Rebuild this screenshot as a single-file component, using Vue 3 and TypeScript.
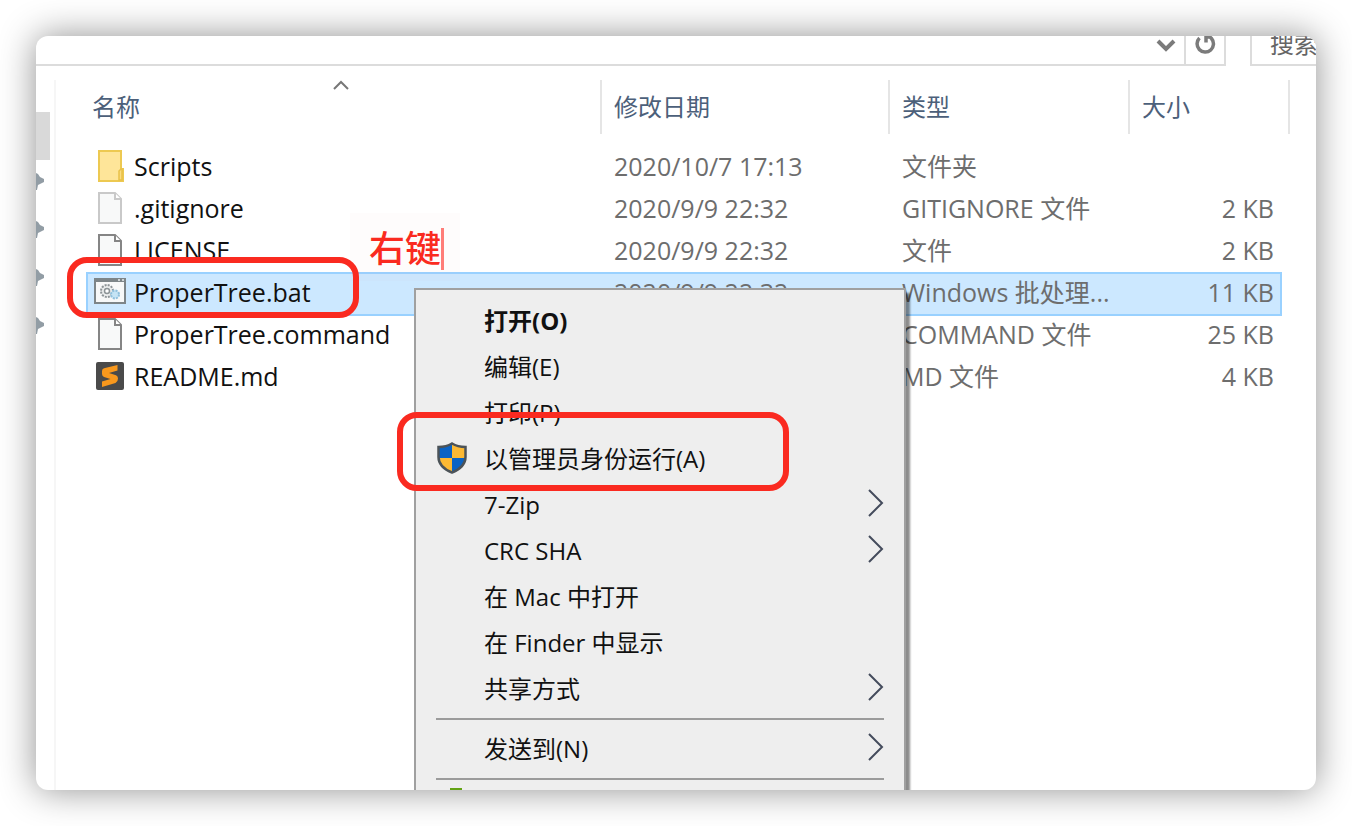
<script setup lang="ts">
type IconKind = 'folder' | 'faded' | 'file' | 'batch' | 'sublime'

interface FileRow {
  name: string
  date: string
  type: string
  size: string
  icon: IconKind
  selected?: boolean
}

interface MenuItem {
  label: string
  strong?: boolean
  shield?: boolean
  submenu?: boolean
}

const columns: string[] = ['名称', '修改日期', '类型', '大小']

const files: FileRow[] = [
  { name: 'Scripts', date: '2020/10/7 17:13', type: '文件夹', size: '', icon: 'folder' },
  { name: '.gitignore', date: '2020/9/9 22:32', type: 'GITIGNORE 文件', size: '2 KB', icon: 'faded' },
  { name: 'LICENSE', date: '2020/9/9 22:32', type: '文件', size: '2 KB', icon: 'file' },
  { name: 'ProperTree.bat', date: '2020/9/9 22:32', type: 'Windows 批处理...', size: '11 KB', icon: 'batch', selected: true },
  { name: 'ProperTree.command', date: '2020/9/9 22:32', type: 'COMMAND 文件', size: '25 KB', icon: 'file' },
  { name: 'README.md', date: '2020/9/9 22:32', type: 'MD 文件', size: '4 KB', icon: 'sublime' },
]

const mainItems: MenuItem[] = [
  { label: '打开(O)', strong: true },
  { label: '编辑(E)' },
  { label: '打印(P)' },
  { label: '以管理员身份运行(A)', shield: true },
  { label: '7-Zip', submenu: true },
  { label: 'CRC SHA', submenu: true },
  { label: '在 Mac 中打开' },
  { label: '在 Finder 中显示' },
  { label: '共享方式', submenu: true },
]

const groups: MenuItem[][] = [mainItems, [{ label: '发送到(N)', submenu: true }]]
</script>

<template>
  <div class="page">
    <main class="window">
      <div class="toolbar">
        <div class="address">
          <button class="tool history" aria-label="历史记录">
            <svg width="20" height="14" viewBox="0 0 20 14"><path d="M2 2l8 8 8-8" fill="none" stroke="#7b7b7b" stroke-width="4" /></svg>
          </button>
          <button class="tool refresh" aria-label="刷新">
            <svg width="22" height="24" viewBox="0 0 22 24">
              <path d="M5.500 6A8.200 8.200 0 1 0 17.500 6.500L16 5H12V10.500" fill="none" stroke="#7b7b7b" stroke-width="3.500" />
            </svg>
          </button>
        </div>
        <input class="search" type="text" placeholder="搜索" aria-label="搜索" />
      </div>

      <div class="body">
        <aside class="side">
          <div class="thumb"></div>
          <svg v-for="n in 4" :key="n" class="pin" width="10" height="48" viewBox="0 0 10 48">
            <path d="M0 13l2 1 2 3 4 2v3l-4 2-2 1-1 5H0z" fill="#929da5" />
          </svg>
        </aside>

        <table class="files">
          <thead>
            <tr class="row head">
              <th v-for="(c, i) in columns" :key="c" scope="col">
                <button class="sort">{{ c }}</button>
                <svg v-if="i === 0" class="arrow" width="18" height="12" viewBox="0 0 18 12"><path d="M2 9l7-7 7 7" fill="none" stroke="#777" stroke-width="2" /></svg>
              </th>
            </tr>
          </thead>
          <tbody>
            <tr v-for="f in files" :key="f.name" class="row item" :class="{ selected: f.selected }">
              <td class="name">
                <svg class="icon" width="32" height="32" viewBox="0 0 32 32">
                  <template v-if="f.icon === 'folder'">
                    <path d="M5 1h22v18h2v12H5z" fill="#fee599" stroke="#edc951" stroke-width="2" />
                    <path d="M25 30V21l2-2h1v11z" fill="#fbdc80" stroke="#e8c14a" stroke-width="1.500" />
                  </template>
                  <g v-else-if="f.icon === 'faded' || f.icon === 'file'" :class="f.icon" stroke-width="2">
                    <path d="M5 1h16l6 6v24H5z" fill="#f8f9f9" />
                    <path d="M21 1v6h6" fill="#fff" />
                  </g>
                  <template v-else-if="f.icon === 'batch'">
                    <path d="M1 3h30v24H1z" fill="#f7f8f8" stroke="#7d8588" stroke-width="2" />
                    <path d="M0 2h32v4H0z" fill="#7d8588" />
                    <path d="M24 3h2v2h-2zM28 3h2v2h-2z" fill="#cfd4d6" />
                    <circle cx="13" cy="15" r="6" fill="#eceeee" stroke="#8d9497" stroke-width="2" stroke-dasharray="2 1.140" />
                    <circle cx="13" cy="15" r="2.500" fill="#fff" stroke="#8d9497" stroke-width="1.500" />
                    <circle cx="21" cy="18.500" r="4" fill="#c5e4f5" stroke="#8fbfdc" stroke-width="2" stroke-dasharray="2 1.140" />
                  </template>
                  <template v-else>
                    <rect x="2" y="2" width="28" height="28" rx="2" fill="#4a4a4a" />
                    <path d="M8 11q0-2 2-2.700L23.500 5v5.500L15 13l7 2.200q2 1 2 3.300 0 3-2.500 4.500L8 27v-5.500l8.500-2.500L10 17q-2-1-2-3z" fill="#f8981d" />
                  </template>
                </svg>
                <span>{{ f.name }}</span>
              </td>
              <td>{{ f.date }}</td>
              <td>{{ f.type }}</td>
              <td class="size">{{ f.size }}</td>
            </tr>
          </tbody>
        </table>
      </div>

      <div class="note">右键<span class="caret"></span></div>

      <div class="menu" role="menu">
        <template v-for="(group, g) in groups" :key="g">
          <button v-for="m in group" :key="m.label" class="entry" :class="{ strong: m.strong }" role="menuitem">
            <span class="slot">
              <svg v-if="m.shield" width="30" height="32" viewBox="0 0 30 32">
                <path d="M15 1C11 4 6 5 1 5v10c0 8 6 13 14 16z" fill="#0b63c4" />
                <path d="M15 1c4 3 9 4 14 4v10c0 8-6 13-14 16z" fill="#fdb933" />
                <path d="M1 16h14v15C7 28 1.500 23 1 16z" fill="#fdb933" />
                <path d="M15 16h14c-.5 7-6 12-14 15z" fill="#0b63c4" />
                <path d="M15 1.500C11 4 6 5 1.500 5v10c0 8 6 12.500 13.500 15.500C22.500 27.500 28.500 23 28.500 15V5C24 5 19 4 15 1.500z" fill="none" stroke="#4c5358" stroke-width="2.500" />
              </svg>
            </span>
            <span class="label">{{ m.label }}</span>
            <svg v-if="m.submenu" class="chevron" width="16" height="28" viewBox="0 0 16 28"><path d="M1 1l13 13L1 27" fill="none" stroke="#444b5c" stroke-width="2" /></svg>
          </button>
          <hr class="rule" />
        </template>
        <div class="more">
          <svg width="16" height="16" viewBox="0 0 16 16"><path d="M2 2h12v14H2z" fill="#63a314" /></svg>
        </div>
      </div>

      <div class="mark mark-file"></div>
      <div class="mark mark-admin"></div>
    </main>
  </div>
</template>

<style>
body {
  margin: 0;
  background: #fff;
}
</style>

<style scoped>
* {
  box-sizing: border-box;
}

.page {
  display: flex;
  min-height: 100vh;
  padding: 36px;
  overflow: hidden;
  font: 24px/42px "Open Sans", "Noto Sans CJK SC", sans-serif;
  color: #111;
}

.window {
  position: relative;
  flex: 1;
  min-width: 0;
  display: flex;
  flex-direction: column;
  overflow: hidden;
  border-radius: 12px;
  background: #fff;
  box-shadow: 0 0 36px rgba(0, 0, 0, 0.44);
}

button {
  padding: 0;
  border: 0;
  background: none;
  font: inherit;
  color: inherit;
  text-align: left;
}

svg {
  display: block;
  flex: none;
}

.toolbar {
  display: flex;
  gap: 24px;
  height: 44px;
  margin-top: -14px;
}

.address {
  flex: 1;
  display: flex;
  justify-content: flex-end;
  border: 2px solid #dcdcdc;
  border-left: 0;
}

.tool {
  display: flex;
  align-items: center;
  justify-content: center;
  width: 36px;
  padding-top: 4px;
}

.refresh {
  width: 40px;
  padding-top: 0;
  border-left: 2px solid #dcdcdc;
}

.search {
  width: 66px;
  padding: 0 0 0 18px;
  border: 2px solid #dcdcdc;
  border-right: 0;
  border-radius: 0;
  font: inherit;
  color: #666;
}

.search::placeholder {
  color: #666;
}

.body {
  flex: 1;
  display: flex;
  align-items: stretch;
  margin-top: 14px;
}

.side {
  width: 20px;
  padding-top: 32px;
  border-right: 2px solid #f6f6f6;
}

.thumb {
  width: 14px;
  height: 48px;
  background: #d9d9d9;
}

.files {
  flex: 1;
  display: block;
  margin-left: 30px;
}

thead,
tbody {
  display: block;
}

.row {
  display: grid;
  grid-template-columns: minmax(0, 1fr) 288px 240px 152px;
  margin-right: 34px;
}

.head {
  grid-template-columns: minmax(0, 1fr) 288px 240px 160px;
  height: 54px;
  margin-right: 26px;
  margin-bottom: 12px;
}

th {
  position: relative;
  padding: 6px 12px;
  border-right: 2px solid #e5e5e5;
  font-weight: 400;
  text-align: left;
  color: #4c607a;
}

th:first-child {
  padding-left: 6px;
}

.arrow {
  position: absolute;
  top: 0;
  left: 50%;
  margin-left: -11px;
}

.item {
  height: 42px;
  font-size: 25px;
  line-height: 40px;
}

td {
  padding: 0 12px;
  white-space: nowrap;
  color: #6d6d6d;
}

td.name {
  display: flex;
  gap: 8px;
  padding: 0 8px;
  color: #111;
}

td.size {
  padding-right: 8px;
  text-align: right;
}

.icon {
  margin-top: 4px;
}

.faded {
  stroke: #c9c9c9;
}

.file {
  stroke: #858585;
}

.selected {
  height: 44px;
  margin-bottom: -2px;
  background: #cce8ff;
  box-shadow: inset 0 0 0 2px #99d1ff;
}

.note {
  position: absolute;
  top: 177px;
  left: 314px;
  display: flex;
  align-items: center;
  width: 110px;
  height: 68px;
  padding: 4px 0 0 19px;
  background: rgba(200, 120, 90, 0.02);
  font-size: 36px;
  font-weight: 500;
  color: #fa2a20;
}

.caret {
  width: 3px;
  height: 42px;
  background: #ff7d78;
}

.menu {
  position: absolute;
  top: 252px;
  left: 378px;
  width: 492px;
  padding: 8px 0;
  border: 2px solid #a0a0a0;
  background: #eee;
  box-shadow: 4px 5px 2px rgba(0, 0, 0, 0.45);
  color: #111;
}

.entry {
  display: flex;
  align-items: center;
  width: 100%;
  height: 46px;
  padding: 0 20px;
}

.slot {
  width: 48px;
  padding: 0 0 2px 1px;
}

.label {
  flex: 1;
}

.chevron {
  margin-bottom: 4px;
}

.strong {
  font-weight: 700;
}

.rule {
  height: 2px;
  margin: 6px 20px;
  border: 0;
  background: #9b9b9b;
}

.more {
  height: 46px;
  padding-left: 32px;
}

.mark {
  position: absolute;
  border: 6px solid #fa2a20;
  border-radius: 20px;
  pointer-events: none;
}

.mark-file {
  top: 221px;
  left: 31px;
  width: 292px;
  height: 61px;
}

.mark-admin {
  top: 376px;
  left: 361px;
  width: 392px;
  height: 79px;
}
</style>
